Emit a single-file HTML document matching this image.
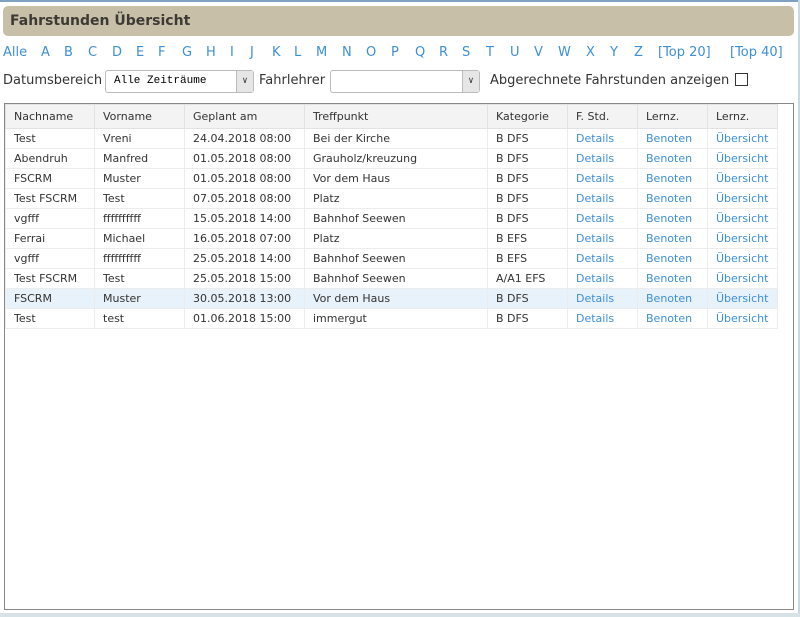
<!DOCTYPE html>
<html><head><meta charset="utf-8"><style>
body{margin:0;width:800px;height:617px;background:#fff;font-family:"DejaVu Sans",Verdana,sans-serif;position:relative;overflow:hidden}
.top{position:absolute;left:0;top:0;width:800px;height:2px;background:#7fa2c2}
.rb{position:absolute;right:0;top:0;width:2px;height:617px;background:#c9d9e4}
.bb{position:absolute;left:0;bottom:0;width:800px;height:4px;background:#d6e2e6}
.hdr{position:absolute;left:3px;top:6px;width:791px;height:30px;background:#c8bfa8;border-radius:5px;font:bold 14px "DejaVu Sans",sans-serif;color:#3c3a34;line-height:31px;padding-left:7px;box-sizing:border-box}
.alpha{position:absolute;top:45px;left:3px;font-size:13px;color:#3d8fd9;white-space:nowrap}
.alpha span{position:absolute}
.flt{position:absolute;top:73px;font-size:13px;color:#333}
.sel{position:absolute;top:70px;height:23px;border:1px solid #bbb;border-radius:3px;box-sizing:border-box;background:#fff;font:11px "Liberation Mono",monospace;line-height:21px;padding-left:8px}
.sel i{position:absolute;right:0;top:0;width:16px;height:21px;background:#e6e6e6;border-left:1px solid #bbb;font-style:normal;font-size:9px;text-align:center;line-height:21px;color:#333}
.box{position:absolute;left:4px;top:103px;width:790px;height:507px;border:1px solid #888;box-sizing:border-box}
table{position:absolute;left:0;top:0;border-collapse:collapse;font-size:11px;color:#333;table-layout:fixed;width:772px}
td,th{height:19px;padding:0 0 0 8px;text-align:left;font-weight:normal;border:1px solid #ececec;white-space:nowrap;overflow:hidden}
th{height:23px;background:#f3f3f3;border-color:#e2e2e2}
td.l{color:#3d8fd9}
tr.h td{background:#e8f2fa}
</style></head><body>
<div class="top"></div><div class="rb"></div><div class="bb"></div>
<div class="hdr">Fahrstunden Übersicht</div>
<div class="alpha">
<span style="left:0">Alle</span><span style="left:38px">A</span><span style="left:61px">B</span><span style="left:85px">C</span><span style="left:109px">D</span><span style="left:133px">E</span><span style="left:155px">F</span><span style="left:179px">G</span><span style="left:203px">H</span><span style="left:227px">I</span><span style="left:247px">J</span><span style="left:269px">K</span><span style="left:291px">L</span><span style="left:313px">M</span><span style="left:339px">N</span><span style="left:363px">O</span><span style="left:388px">P</span><span style="left:412px">Q</span><span style="left:436px">R</span><span style="left:459px">S</span><span style="left:483px">T</span><span style="left:507px">U</span><span style="left:531px">V</span><span style="left:555px">W</span><span style="left:583px">X</span><span style="left:607px">Y</span><span style="left:631px">Z</span><span style="left:655px">[Top 20]</span><span style="left:727px">[Top 40]</span>
</div>
<div class="flt" style="left:3px">Datumsbereich</div>
<div class="sel" style="left:105px;width:149px">Alle Zeiträume<i>&#8744;</i></div>
<div class="flt" style="left:259px">Fahrlehrer</div>
<div class="sel" style="left:330px;width:150px"><i>&#8744;</i></div>
<div class="flt" style="left:490px">Abgerechnete Fahrstunden anzeigen</div>
<div style="position:absolute;left:735px;top:73px;width:11px;height:11px;border:1px solid #333"></div>
<div class="box"><table>
<colgroup><col style="width:89px"><col style="width:90px"><col style="width:120px"><col style="width:183px"><col style="width:80px"><col style="width:70px"><col style="width:70px"><col style="width:70px"></colgroup>
<tr><th>Nachname</th><th>Vorname</th><th>Geplant am</th><th>Treffpunkt</th><th>Kategorie</th><th>F. Std.</th><th>Lernz.</th><th>Lernz.</th></tr>
<tr><td>Test</td><td>Vreni</td><td>24.04.2018 08:00</td><td>Bei der Kirche</td><td>B DFS</td><td class="l">Details</td><td class="l">Benoten</td><td class="l">Übersicht</td></tr>
<tr><td>Abendruh</td><td>Manfred</td><td>01.05.2018 08:00</td><td>Grauholz/kreuzung</td><td>B DFS</td><td class="l">Details</td><td class="l">Benoten</td><td class="l">Übersicht</td></tr>
<tr><td>FSCRM</td><td>Muster</td><td>01.05.2018 08:00</td><td>Vor dem Haus</td><td>B DFS</td><td class="l">Details</td><td class="l">Benoten</td><td class="l">Übersicht</td></tr>
<tr><td>Test FSCRM</td><td>Test</td><td>07.05.2018 08:00</td><td>Platz</td><td>B DFS</td><td class="l">Details</td><td class="l">Benoten</td><td class="l">Übersicht</td></tr>
<tr><td>vgfff</td><td>ffffffffff</td><td>15.05.2018 14:00</td><td>Bahnhof Seewen</td><td>B DFS</td><td class="l">Details</td><td class="l">Benoten</td><td class="l">Übersicht</td></tr>
<tr><td>Ferrai</td><td>Michael</td><td>16.05.2018 07:00</td><td>Platz</td><td>B EFS</td><td class="l">Details</td><td class="l">Benoten</td><td class="l">Übersicht</td></tr>
<tr><td>vgfff</td><td>ffffffffff</td><td>25.05.2018 14:00</td><td>Bahnhof Seewen</td><td>B EFS</td><td class="l">Details</td><td class="l">Benoten</td><td class="l">Übersicht</td></tr>
<tr><td>Test FSCRM</td><td>Test</td><td>25.05.2018 15:00</td><td>Bahnhof Seewen</td><td>A/A1 EFS</td><td class="l">Details</td><td class="l">Benoten</td><td class="l">Übersicht</td></tr>
<tr class="h"><td>FSCRM</td><td>Muster</td><td>30.05.2018 13:00</td><td>Vor dem Haus</td><td>B DFS</td><td class="l">Details</td><td class="l">Benoten</td><td class="l">Übersicht</td></tr>
<tr><td>Test</td><td>test</td><td>01.06.2018 15:00</td><td>immergut</td><td>B DFS</td><td class="l">Details</td><td class="l">Benoten</td><td class="l">Übersicht</td></tr>
</table></div>
</body></html>
